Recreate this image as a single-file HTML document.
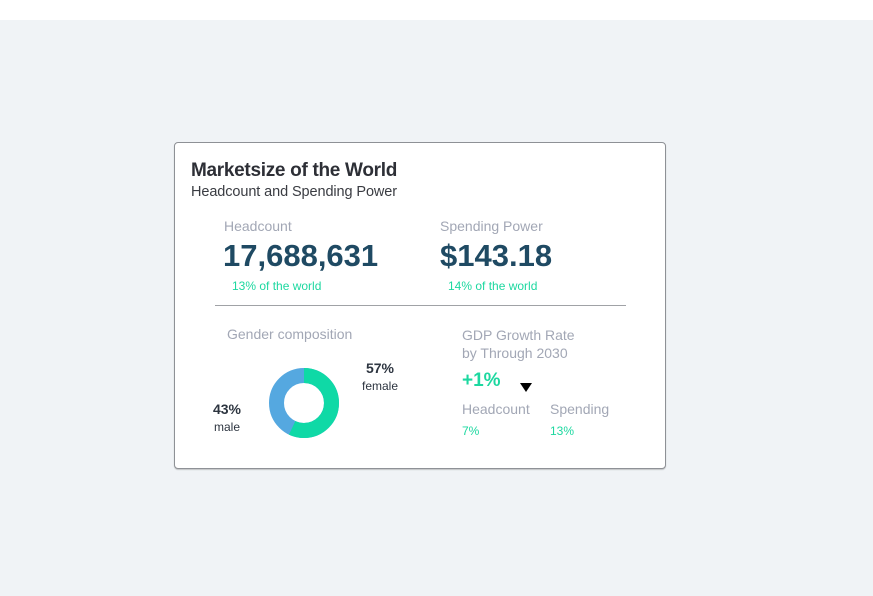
<!DOCTYPE html>
<html><head><style>
*{margin:0;padding:0;box-sizing:border-box}
body{width:873px;height:596px;background:#f0f3f6;font-family:"Liberation Sans",sans-serif;position:relative;overflow:hidden}
.top{position:absolute;left:0;top:0;width:873px;height:20px;background:#fff}
.card{position:absolute;left:174px;top:142px;width:492px;height:327px;background:#fff;border:1px solid #8e9196;border-radius:4px;box-shadow:0 1px 1px rgba(0,0,0,.2)}
.t{position:absolute;white-space:nowrap}
.g{color:#a2a7b5}
.gr{color:#1dd8a0}
.big{color:#1f4a63;font-weight:bold;font-size:31px;letter-spacing:0px}
</style></head><body>
<div class="top"></div>
<div class="card">
<div class="t" style="left:16px;top:17px;font-size:19px;color:#2d2f36;font-weight:bold;letter-spacing:-0.3px">Marketsize of the World</div>
<div class="t" style="left:16px;top:41px;font-size:14.5px;color:#3a3c42;letter-spacing:-0.1px">Headcount and Spending Power</div>
<div class="t g" style="left:49px;top:75px;font-size:14px">Headcount</div>
<div class="t big" style="left:48px;top:95px">17,688,631</div>
<div class="t gr" style="left:57px;top:136px;font-size:12px">13% of the world</div>
<div class="t g" style="left:265px;top:75px;font-size:14px">Spending Power</div>
<div class="t big" style="left:265px;top:95px">$143.18</div>
<div class="t gr" style="left:273px;top:136px;font-size:12px">14% of the world</div>
<div style="position:absolute;left:40px;top:162px;width:411px;height:1px;background:#a0a2a6"></div>
<div class="t g" style="left:52px;top:183px;font-size:14px">Gender composition</div>
<svg style="position:absolute;left:93px;top:224px" width="72" height="72" viewBox="0 0 72 72">
<circle cx="36" cy="36" r="27.5" fill="none" stroke="#55a8e0" stroke-width="15"/>
<circle cx="36" cy="36" r="27.5" fill="none" stroke="#0fd9a6" stroke-width="15" stroke-dasharray="98.5 200" transform="rotate(-90 36 36)"/>
</svg>
<div class="t" style="left:185px;top:217px;font-size:14px;color:#2d3540;font-weight:bold;width:40px;text-align:center">57%</div>
<div class="t" style="left:185px;top:236px;font-size:12px;color:#2d3540;width:40px;text-align:center">female</div>
<div class="t" style="left:32px;top:258px;font-size:14px;color:#2d3540;font-weight:bold;width:40px;text-align:center">43%</div>
<div class="t" style="left:32px;top:277px;font-size:12px;color:#2d3540;width:40px;text-align:center">male</div>
<div class="t g" style="left:287px;top:183px;font-size:14px;line-height:18px">GDP Growth Rate<br>by Through 2030</div>
<div class="t gr" style="left:287px;top:227px;font-size:19px;font-weight:bold">+1%</div>
<div style="position:absolute;left:345px;top:240px;width:0;height:0;border-left:6px solid transparent;border-right:6px solid transparent;border-top:9px solid #000"></div>
<div class="t g" style="left:287px;top:258px;font-size:14px">Headcount</div>
<div class="t g" style="left:375px;top:258px;font-size:14px">Spending</div>
<div class="t gr" style="left:287px;top:281px;font-size:12px">7%</div>
<div class="t gr" style="left:375px;top:281px;font-size:12px">13%</div>
</div>
</body></html>
